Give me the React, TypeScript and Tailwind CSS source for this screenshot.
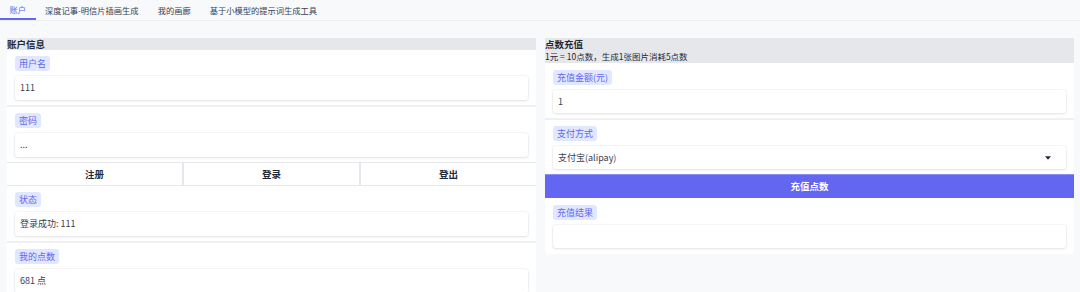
import React from 'react';

const tabs = ['账户', '深度记事-明信片插画生成', '我的画廊', '基于小模型的提示词生成工具'];

const Badge: React.FC<{ text: string }> = ({ text }) => (
  <span className="inline-block h-[15px] px-[4px] rounded-[3px] bg-[#e0e7ff] text-[#6366f1] text-[9px] leading-[15px]">
    {text}
  </span>
);

const Field: React.FC<{ label: string; value?: string; h?: string; pt?: string; pb?: string; caret?: boolean }> = ({
  label,
  value,
  h = 'h-[24px]',
  pt = 'pt-[6px]',
  pb = 'pb-[5px]',
  caret,
}) => (
  <div className={`bg-white px-2 ${pt} ${pb} flex flex-col`}>
    <div className="flex">
      <Badge text={label} />
    </div>
    <div
      className={`mt-[5px] ${h} rounded-[3px] bg-white shadow-[0_0_0_1px_rgba(0,0,0,0.03),0_1px_3px_rgba(0,0,0,0.09)] flex items-center justify-between pl-[5px] pr-[15px] text-[9px] text-[#374151]`}
    >
      <span>{value}</span>
      {caret && (
        <svg width="6" height="4" viewBox="0 0 6 4">
          <path d="M0 0.3 H6 L3 3.8 Z" fill="#1f2937" />
        </svg>
      )}
    </div>
  </div>
);

export default function App() {
  return (
    <div className="w-[1080px] h-[292px] overflow-hidden bg-[#f8f9fb] text-[#1f2937] font-['Noto_Sans_CJK_SC','Noto_Sans',sans-serif]">
      <div className="flex h-[21px] border-b border-[#eceef2]">
        {tabs.map((t, i) => (
          <div
            key={t}
            className={
              i === 0
                ? 'h-[20px] px-[9.5px] flex items-center text-[8.25px] text-[#6366f1] border-b-2 border-[#6366f1]'
                : 'h-[20px] px-[9.5px] flex items-center text-[8.25px] text-[#374151]'
            }
          >
            {t}
          </div>
        ))}
      </div>

      <div className="flex gap-[9px] pl-[7px] pr-[6px] pt-[17px]">
        {/* left column */}
        <div className="flex-1 flex flex-col bg-[#eef0f3]">
          <div className="h-[12px] bg-[#e5e7eb] text-[9.5px] leading-[12px] font-bold text-[#1f2937]">账户信息</div>
          <div className="flex flex-col gap-[2px]">
            <Field label="用户名" value="111" />
            <Field label="密码" value="..." />
          </div>
          <div className="flex h-[24px] border-y border-[#e5e7eb] bg-white">
            {['注册', '登录', '登出'].map((b, i) => (
              <div
                key={b}
                className={`flex-1 flex items-center justify-center text-[9.5px] font-bold text-[#1f2937] ${
                  i > 0 ? 'border-l-2 border-[#e5e7eb]' : ''
                }`}
              >
                {b}
              </div>
            ))}
          </div>
          <div className="flex flex-col gap-[2px]">
            <Field label="状态" value="登录成功: 111" />
            <Field label="我的点数" value="681 点" />
          </div>
        </div>

        {/* right column */}
        <div className="flex-1 self-start flex flex-col bg-white rounded-b-[4px] overflow-hidden">
          <div className="h-[25px] bg-[#e5e7eb] flex flex-col">
            <div className="text-[9.5px] leading-[12px] font-bold text-[#1f2937]">点数充值</div>
            <div className="text-[8.5px] leading-[13px] text-[#1f2937]">1元 = 10点数，生成1张图片消耗5点数</div>
          </div>
          <div className="flex flex-col gap-[2px] bg-[#eef0f3]">
            <Field label="充值金额(元)" value="1" h="h-[23px]" pt="pt-[7px]" />
            <Field label="支付方式" value="支付宝(alipay)" h="h-[23px]" caret />
          </div>
          <div className="h-[24px] bg-[#6366f1] border-t border-[#8b8ef5] flex items-center justify-center text-white text-[9.5px] font-bold">
            充值点数
          </div>
          <Field label="充值结果" value="" h="h-[23px]" pt="pt-[7px]" pb="pb-[6px]" />
        </div>
      </div>
    </div>
  );
}
